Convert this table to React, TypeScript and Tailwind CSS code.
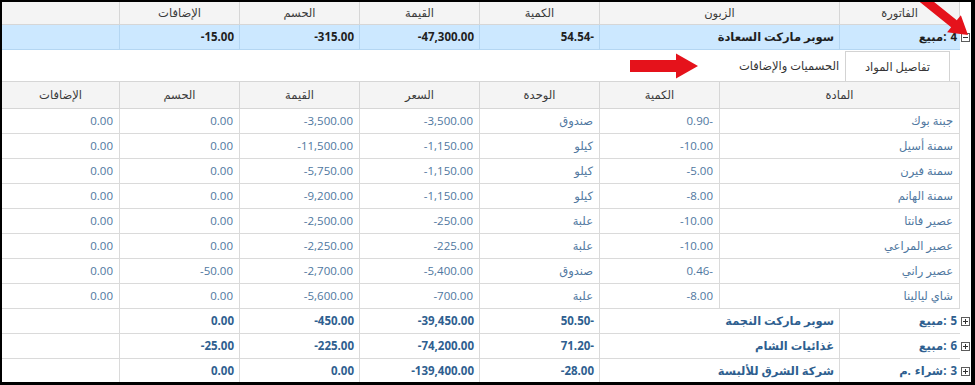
import React from "react";

const outerW = [118, 120, 120, 120, 120, 240, 120];
const innerW = [118, 120, 120, 120, 120, 120, 240];

const items = [
  ["0.00", "0.00", "-3,500.00", "-3,500.00", "صندوق", "0.90-", "جبنة بوك"],
  ["0.00", "0.00", "-11,500.00", "-1,150.00", "كيلو", "-10.00", "سمنة أسيل"],
  ["0.00", "0.00", "-5,750.00", "-1,150.00", "كيلو", "-5.00", "سمنة فيرن"],
  ["0.00", "0.00", "-9,200.00", "-1,150.00", "كيلو", "-8.00", "سمنة الهانم"],
  ["0.00", "0.00", "-2,500.00", "-250.00", "علبة", "-10.00", "عصير فانتا"],
  ["0.00", "0.00", "-2,250.00", "-225.00", "علبة", "-10.00", "عصير المراعي"],
  ["0.00", "-50.00", "-2,700.00", "-5,400.00", "صندوق", "0.46-", "عصير راني"],
  ["0.00", "0.00", "-5,600.00", "-700.00", "علبة", "-8.00", "شاي ليالينا"],
];

const totals = [
  { vals: ["", "0.00", "-450.00", "-39,450.00", "50.50-", "سوبر ماركت النجمة"], pre: "", word: "مبيع", num: "5" },
  { vals: ["", "-25.00", "-225.00", "-74,200.00", "71.20-", "غذائيات الشام"], pre: "", word: "مبيع", num: "6" },
  { vals: ["", "0.00", "0.00", "-139,400.00", "-28.00", "شركة الشرق للألبسة"], pre: "م.", word: "شراء", num: "3" },
];

const isArabic = (s: string) => /[\u0600-\u06FF]/.test(s);

// each piece is its own flex item so the visual order is fixed left to right
function Txt({ v }: { v: string }) {
  if (!v) return null;
  if (isArabic(v)) return <span>{v}</span>;
  if (v.endsWith("-")) {
    return (
      <span dir="ltr" className="flex flex-row">
        <span>{v.slice(0, -1)}</span>
        <span>-</span>
      </span>
    );
  }
  if (v.startsWith("-")) {
    return (
      <span dir="ltr" className="flex flex-row">
        <span>-</span>
        <span>{v.slice(1)}</span>
      </span>
    );
  }
  return <span>{v}</span>;
}

function Invoice({ pre, word, num }: { pre: string; word: string; num: string }) {
  return (
    <span dir="ltr" className="flex flex-row">
      {pre && <span>م</span>}
      {pre && <span className="mr-[4px]">.</span>}
      <span>{word}</span>
      <span>:</span>
      <span className="ml-[4px]">{num}</span>
    </span>
  );
}

function Box({ open }: { open?: boolean }) {
  return (
    <div className="w-[11px] flex items-center justify-center bg-white">
      <div className="relative w-[9px] h-[9px] border border-[#5c5c5c] bg-white">
        <div className="absolute left-[1px] right-[1px] top-[3px] h-[1px] bg-[#333]" />
        {!open && <div className="absolute top-[1px] bottom-[1px] left-[3px] w-[1px] bg-[#333]" />}
      </div>
    </div>
  );
}

function arrow(x1: number, y1: number, x2: number, y2: number, sw: number, hw: number, hl: number) {
  const len = Math.hypot(x2 - x1, y2 - y1);
  const ux = (x2 - x1) / len;
  const uy = (y2 - y1) / len;
  const nx = -uy;
  const ny = ux;
  const pts: [number, number][] = [
    [0, sw / 2], [len - hl, sw / 2], [len - hl, hw / 2], [len, 0],
    [len - hl, -hw / 2], [len - hl, -sw / 2], [0, -sw / 2],
  ];
  return pts.map(([a, b]) => `${x1 + ux * a + nx * b},${y1 + uy * a + ny * b}`).join(" ");
}

export default function App() {
  return (
    <div dir="ltr" className="w-[975px] h-[385px] bg-black pt-[2px] pl-[2px] pr-[4px] pb-[3px]">
      <div className="relative w-full h-full bg-white overflow-hidden font-['Open_Sans','DejaVu_Sans',sans-serif] text-[11.5px]">
        {/* top header */}
        <div className="flex h-[23px]">
          {["", "الإضافات", "الحسم", "القيمة", "الكمية", "الزبون", "الفاتورة"].map((h, i) => (
            <div
              key={i}
              style={{ width: outerW[i] }}
              className="flex items-center justify-center bg-[#f4f4f4] border-r border-b border-[#d6d6d6] text-[#3a3a3a]"
            >
              <Txt v={h} />
            </div>
          ))}
          <div className="w-[11px] bg-white" />
        </div>

        {/* selected invoice row */}
        <div className="flex h-[25px]">
          {["", "-15.00", "-315.00", "-47,300.00", "54.54-", "سوبر ماركت السعادة"].map((v, i) => (
            <div
              key={i}
              style={{ width: outerW[i] }}
              className="flex items-center justify-end pr-[5px] bg-[#cce8ff] border-r border-b border-[#b4d6f2] font-bold text-[#1f1f1f]"
            >
              <Txt v={v} />
            </div>
          ))}
          <div className="w-[120px] flex items-center justify-end pr-[3px] bg-[#cce8ff] border-b border-[#b4d6f2] font-bold text-[#1f1f1f]">
            <Invoice pre="" word="مبيع" num="4" />
          </div>
          <Box open />
        </div>

        {/* tabs */}
        <div className="flex justify-end items-end h-[31px] pr-[21px]">
          <div className="w-[112px] h-[30px] flex items-center justify-center text-[#333]">
            <Txt v="الحسميات والإضافات" />
          </div>
          <div className="w-[105px] h-[30px] flex items-center justify-center bg-white border border-b-0 border-[#d3d3d3] text-[#333]">
            <Txt v="تفاصيل المواد" />
          </div>
        </div>

        {/* inner header */}
        <div className="flex h-[28px]">
          {["الإضافات", "الحسم", "القيمة", "السعر", "الوحدة", "الكمية", "المادة"].map((h, i) => (
            <div
              key={i}
              style={{ width: innerW[i] }}
              className="flex items-center justify-center bg-[#f4f4f4] border-r border-t border-b border-[#d6d6d6] text-[#3a3a3a]"
            >
              <Txt v={h} />
            </div>
          ))}
        </div>

        {/* item rows */}
        {items.map((row, r) => (
          <div key={r} className="flex h-[25px]">
            {row.map((v, i) => (
              <div
                key={i}
                style={{ width: innerW[i] }}
                className="flex items-center justify-end pr-[6px] border-r border-b border-[#dadada] text-[#4f77a0]"
              >
                <Txt v={v} />
              </div>
            ))}
          </div>
        ))}

        {/* other invoices */}
        {totals.map((t, r) => (
          <div key={r} className="flex h-[25px] shrink-0">
            {t.vals.map((v, i) => (
              <div
                key={i}
                style={{ width: outerW[i] }}
                className="flex items-center justify-end pr-[5px] border-r border-b border-[#dadada] font-bold text-[#2f5f90]"
              >
                <Txt v={v} />
              </div>
            ))}
            <div className="w-[120px] flex items-center justify-end pr-[3px] border-b border-[#dadada] font-bold text-[#2f5f90]">
              <Invoice pre={t.pre} word={t.word} num={t.num} />
            </div>
            <Box />
          </div>
        ))}

        {/* red arrows */}
        <svg className="absolute inset-0 pointer-events-none" width="969" height="380" viewBox="2 2 969 380">
          <polygon points={arrow(922, -2, 968, 35, 9, 22, 18)} fill="#e5121b" />
          <polygon points={arrow(630, 66, 698, 66, 12, 25, 22)} fill="#e5121b" />
        </svg>
      </div>
    </div>
  );
}
